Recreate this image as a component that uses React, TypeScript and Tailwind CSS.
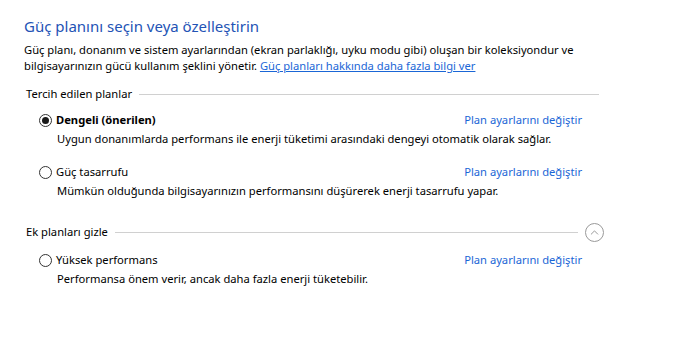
import { ChevronUp } from "lucide-react"

type Plan = {
  name: string
  desc: string
  selected?: boolean
}

const preferred: Plan[] = [
  {
    name: "Dengeli (önerilen)",
    desc: "Uygun donanımlarda performans ile enerji tüketimi arasındaki dengeyi otomatik olarak sağlar.",
    selected: true,
  },
  {
    name: "Güç tasarrufu",
    desc: "Mümkün olduğunda bilgisayarınızın performansını düşürerek enerji tasarrufu yapar.",
  },
]

const extra: Plan[] = [
  {
    name: "Yüksek performans",
    desc: "Performansa önem verir, ancak daha fazla enerji tüketebilir.",
  },
]

function Radio({ checked }: { checked?: boolean }) {
  return (
    <span className="flex h-[13px] w-[13px] shrink-0 items-center justify-center rounded-full border border-[#333333] bg-white">
      {checked && <span className="h-[7px] w-[7px] rounded-full bg-[#1a1a1a]" />}
    </span>
  )
}

function PlanRow({ plan, first }: { plan: Plan; first?: boolean }) {
  return (
    <div className={first ? "mt-[10px]" : "mt-[17px]"}>
      <div className="flex h-4 items-center justify-between pl-[15px] pr-[17px]">
        <div className="flex items-center gap-[4px]">
          <Radio checked={plan.selected} />
          <span className={plan.selected ? "font-bold text-black" : "text-black"}>{plan.name}</span>
        </div>
        <a className="cursor-pointer text-[#1a66d6]">Plan ayarlarını değiştir</a>
      </div>
      <p className="mt-[3px] pl-[33px] text-black">{plan.desc}</p>
    </div>
  )
}

export default function App() {
  return (
    <div
      className="h-[363px] w-[693px] bg-white pl-6 pt-[15px] text-[11.2px] leading-4"
      style={{ fontFamily: "'Segoe UI', 'Noto Sans', sans-serif" }}
    >
      <h1 className="text-[15px] leading-[22px] text-[#2353b5]">Güç planını seçin veya özelleştirin</h1>
      <p className="mt-[5px] whitespace-nowrap text-black">
        Güç planı, donanım ve sistem ayarlarından (ekran parlaklığı, uyku modu gibi) oluşan bir koleksiyondur ve
        <br />
        bilgisayarınızın gücü kullanım şeklini yönetir.{" "}
        <a className="cursor-pointer text-[#1a66d6] underline">Güç planları hakkında daha fazla bilgi ver</a>
      </p>

      <div className="w-[575px]">
        <div className="mt-3 flex h-4 items-center gap-[7px] pl-[2px]">
          <span className="text-black">Tercih edilen planlar</span>
          <span className="h-px flex-1 bg-[#d0d0d0]" />
        </div>
        {preferred.map((p, i) => (
          <PlanRow key={p.name} plan={p} first={i === 0} />
        ))}

        <div className="mt-[25px] flex h-4 items-center gap-[7px] pl-[2px]">
          <span className="text-black">Ek planları gizle</span>
          <span className="h-px flex-1 bg-[#d0d0d0]" />
          <span className="-mr-[5px] flex h-[19px] w-[19px] items-center justify-center rounded-full border border-[#9a9a9a]">
            <ChevronUp className="h-[13px] w-[13px] text-[#8a8a8a]" strokeWidth={1.6} />
          </span>
        </div>
        <div className="mt-[12px]">
          {extra.map((p) => (
            <PlanRow key={p.name} plan={p} first />
          ))}
        </div>
      </div>
    </div>
  )
}
